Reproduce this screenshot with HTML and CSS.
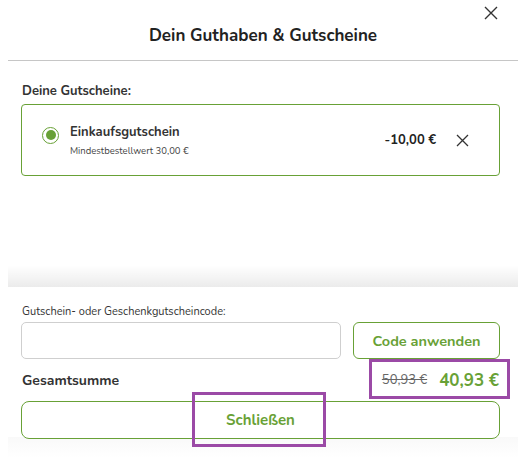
FILE: index.html
```html
<!DOCTYPE html>
<html lang="de">
<head>
    <meta charset="UTF-8">
    <meta name="viewport" content="width=device-width, initial-scale=1.0">
    <title>Dein Guthaben &amp; Gutscheine</title>
    <link rel="stylesheet" href="styles.css">
</head>
<body>
<div class="modal">
    <header class="modal-head">
        <h2>Dein Guthaben &amp; Gutscheine</h2>
        <button class="close-btn" aria-label="Schließen">
            <svg width="14" height="14" viewBox="0 0 14 14"><path d="M1 1L13 13M13 1L1 13" stroke="#333" stroke-width="1.4" fill="none"/></svg>
        </button>
    </header>
    <section class="modal-body">
        <h3>Deine Gutscheine:</h3>
        <div class="voucher">
            <span class="radio"></span>
            <div class="voucher-info">
                <strong>Einkaufsgutschein</strong>
                <small>Mindestbestellwert 30,00 €</small>
            </div>
            <span class="voucher-value">-10,00 €</span>
            <button class="remove-btn" aria-label="Entfernen">
                <svg width="13" height="13" viewBox="0 0 13 13"><path d="M1 1L12 12M12 1L1 12" stroke="#333" stroke-width="1.3" fill="none"/></svg>
            </button>
        </div>
    </section>
    <div class="fade"></div>
    <footer class="modal-foot">
        <label for="code">Gutschein- oder Geschenkgutscheincode:</label>
        <div class="code-row">
            <input type="text" id="code">
            <button class="btn-outline btn-apply">Code anwenden</button>
        </div>
        <div class="total-row">
            <span class="total-label">Gesamtsumme</span>
            <div class="total-prices marked">
                <s class="old-price">50,93 €</s>
                <span class="new-price">40,93 €</span>
            </div>
        </div>
        <button class="btn-outline btn-close"><span class="marked marked-close">Schließen</span></button>
    </footer>
</div>
</body>
</html>
```

FILE: styles.css
```css
body {
    margin: 0;
    font-family: "Nunito", "Lato", "Open Sans", sans-serif;
    color: #333;
    background: #fff;
}
.modal {
    width: 510px;
    margin-left: 8px;
}
.modal-head {
    position: relative;
    height: 60px;
    border-bottom: 1px solid #c6c6c6;
    display: flex;
    align-items: center;
    justify-content: center;
}
.modal-head h2 {
    margin: 11px 0 0;
    font-size: 17px;
    font-weight: 700;
    color: #222;
}
.close-btn {
    position: absolute;
    top: 6px;
    right: 20px;
    background: none;
    border: none;
    padding: 0;
    cursor: pointer;
}
.modal-body {
    box-sizing: border-box;
    height: 204px;
    padding: 21px 18px 0 13px;
}
.modal-body h3 {
    margin: 0 0 4px 1px;
    font-size: 13px;
    font-weight: 700;
    color: #333;
}
.voucher {
    display: flex;
    align-items: center;
    height: 70px;
    padding: 0 30px 0 20px;
    border: 1px solid #68a136;
    border-radius: 4px;
}
.radio {
    width: 15px;
    height: 15px;
    border: 1.5px solid #68a136;
    border-radius: 50%;
    display: flex;
    align-items: center;
    justify-content: center;
    margin-bottom: 10px;
}
.radio::after {
    content: "";
    width: 10px;
    height: 10px;
    border-radius: 50%;
    background: #68a136;
}
.voucher-info {
    display: flex;
    flex-direction: column;
    margin-left: 11px;
    flex: 1;
}
.voucher-info strong {
    font-size: 13px;
    color: #333;
}
.voucher-info small {
    font-size: 9.5px;
    color: #444;
    margin-top: 3px;
}
.voucher-value {
    font-size: 13px;
    font-weight: 700;
    color: #222;
}
.remove-btn {
    margin-left: 20px;
    background: none;
    border: none;
    padding: 0;
    display: flex;
}
.fade {
    height: 22px;
    background: linear-gradient(rgba(0, 0, 0, 0), rgba(0, 0, 0, 0.08));
}
.modal-foot {
    padding: 17px 18px 0 13px;
    height: 154px;
    background: linear-gradient(#fff 150px, #f9f9f9 150px, #fff);
}
.modal-foot label {
    display: block;
    margin-left: 1px;
    font-size: 11px;
    color: #333;
}
.code-row {
    display: flex;
    gap: 12px;
    margin-top: 3px;
}
.code-row input {
    width: 320px;
    height: 37px;
    box-sizing: border-box;
    border: 1px solid #cfcfcf;
    border-radius: 5px;
}
.btn-outline {
    background: #fff;
    border: 1px solid #68a136;
    color: #68a136;
    font-family: inherit;
    font-weight: 700;
    cursor: pointer;
}
.btn-apply {
    flex: 1;
    height: 37px;
    border-radius: 6px;
    font-size: 14.5px;
}
.total-row {
    display: flex;
    align-items: center;
    justify-content: space-between;
    height: 42px;
}
.total-label {
    margin-left: 1px;
    font-size: 14px;
    font-weight: 700;
    color: #333;
}
.total-prices {
    display: flex;
    align-items: center;
    gap: 12px;
    margin-right: 1px;
}
.old-price {
    font-size: 13px;
    color: #666;
}
.new-price {
    font-size: 17px;
    font-weight: 700;
    color: #68a136;
}
.marked {
    position: relative;
}
.marked::after {
    content: "";
    position: absolute;
    border: 3px solid #9b4aa6;
}
.total-prices.marked::after {
    top: -10px;
    bottom: -7px;
    left: -13px;
    right: -11px;
}
.btn-close {
    width: 100%;
    height: 38px;
    border-radius: 8px;
    font-size: 15px;
    overflow: visible;
}
.marked-close::after {
    top: -18px;
    bottom: -17px;
    left: -34px;
    right: -31px;
}
```
